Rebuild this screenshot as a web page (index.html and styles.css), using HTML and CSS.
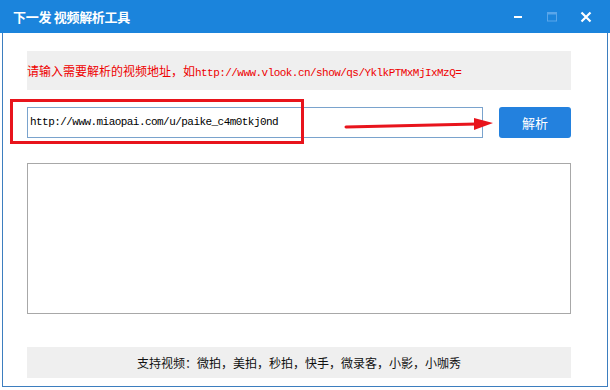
FILE: index.html
```html
<html>

<head>
    <title>下一发 视频解析工具</title>
    <link rel="stylesheet" href="styles.css">
</head>

<body>
    <div class="titleBar">
        <div class="titleText">下一发 视频解析工具</div>
        <div class="winControls">
            <div class="winBtn">
                <svg width="10" height="10" viewBox="0 0 10 10"><rect x="1" y="4" width="8" height="2" fill="#ffffff" /></svg>
            </div>
            <div class="winBtn">
                <svg width="10" height="10" viewBox="0 0 10 10"><rect x="0.5" y="0.5" width="9" height="8.5" fill="none" stroke="#5aa6ea" stroke-width="1" /><rect x="0.5" y="0.5" width="9" height="2" fill="#5aa6ea" /></svg>
            </div>
            <div class="winBtn">
                <svg width="12" height="12" viewBox="0 0 12 12"><path d="M1.5 1.5 L10.5 10.5 M10.5 1.5 L1.5 10.5" stroke="#ffffff" stroke-width="2.2" fill="none" /></svg>
            </div>
        </div>
    </div>

    <div class="frame">
        <div class="notice">
            <span class="cn">请输入需要解析的视频地址，如</span><span class="mono">http://www.vlook.cn/show/qs/YklkPTMxMjIxMzQ=</span>
        </div>

        <div class="inputRow">
            <div class="urlInput"><span class="mono">http://www.miaopai.com/u/paike_c4m0tkj0nd</span></div>
            <div class="button butBlue">解析</div>
        </div>

        <div class="resultBox"></div>

        <div class="support">支持视频：微拍，美拍，秒拍，快手，微录客，小影，小咖秀</div>

        <!-- annotations drawn over the form -->
        <div class="markBox"></div>
        <svg class="markArrow" width="160" height="25" viewBox="0 0 160 25">
            <path d="M3 14 L134 11" stroke="#e8141c" stroke-width="3" fill="none" stroke-linecap="round" />
            <polygon points="131,5 150,10 131,17" fill="#e8141c" />
        </svg>
    </div>
</body>

</html>
```

FILE: styles.css
```css
body {
    margin: 0;
    background-color: white;
    font-family: "Noto Sans CJK SC", sans-serif;
}

.titleBar {
    height: 33px;
    background-color: #1b84dc;
    display: flex;
    align-items: center;
    justify-content: space-between;
}

.titleText {
    padding-left: 13px;
    color: white;
    font-weight: bold;
    font-size: 13px;
    letter-spacing: -0.3px;
}

.winControls {
    display: flex;
    padding-right: 7px;
}

.winBtn {
    width: 34px;
    height: 33px;
    display: flex;
    align-items: center;
    justify-content: center;
}

.frame {
    position: relative;
    margin: 0 2px;
    height: 354px;
    box-sizing: border-box;
    border: 1px solid #3d7ebf;
    border-top: none;
    padding-left: 24px;
    padding-top: 18px;
}

.cn {
    font-family: "Noto Sans CJK SC", sans-serif;
    font-size: 12px;
}

.mono {
    font-family: "Liberation Mono", monospace;
    font-size: 11px;
    letter-spacing: -0.55px;
}

.notice {
    width: 544px;
    height: 39px;
    line-height: 39px;
    background-color: #efefef;
    color: #ee0000;
    white-space: nowrap;
}

.inputRow {
    display: flex;
    margin-top: 17px;
    gap: 16px;
}

.urlInput {
    width: 456px;
    height: 31px;
    box-sizing: border-box;
    border: 1px solid #7aa3cd;
    padding-left: 2px;
    line-height: 29px;
    color: black;
}

.button {
    width: 72px;
    height: 31px;
    line-height: 31px;
    text-align: center;
    color: white;
    font-size: 13px;
    border-radius: 3px;
}

.butBlue {
    background-color: #2381de;
}

.resultBox {
    margin-top: 25px;
    width: 544px;
    height: 151px;
    box-sizing: border-box;
    border: 1px solid #a8a8a8;
}

.support {
    margin-top: 33px;
    width: 544px;
    height: 31px;
    line-height: 31px;
    background-color: #efefef;
    text-align: center;
    font-size: 12px;
    color: #111111;
}

.markBox {
    position: absolute;
    left: 7px;
    top: 66px;
    width: 294px;
    height: 45px;
    box-sizing: border-box;
    border: 3px solid #e8141c;
}

.markArrow {
    position: absolute;
    left: 340px;
    top: 80px;
}
```
